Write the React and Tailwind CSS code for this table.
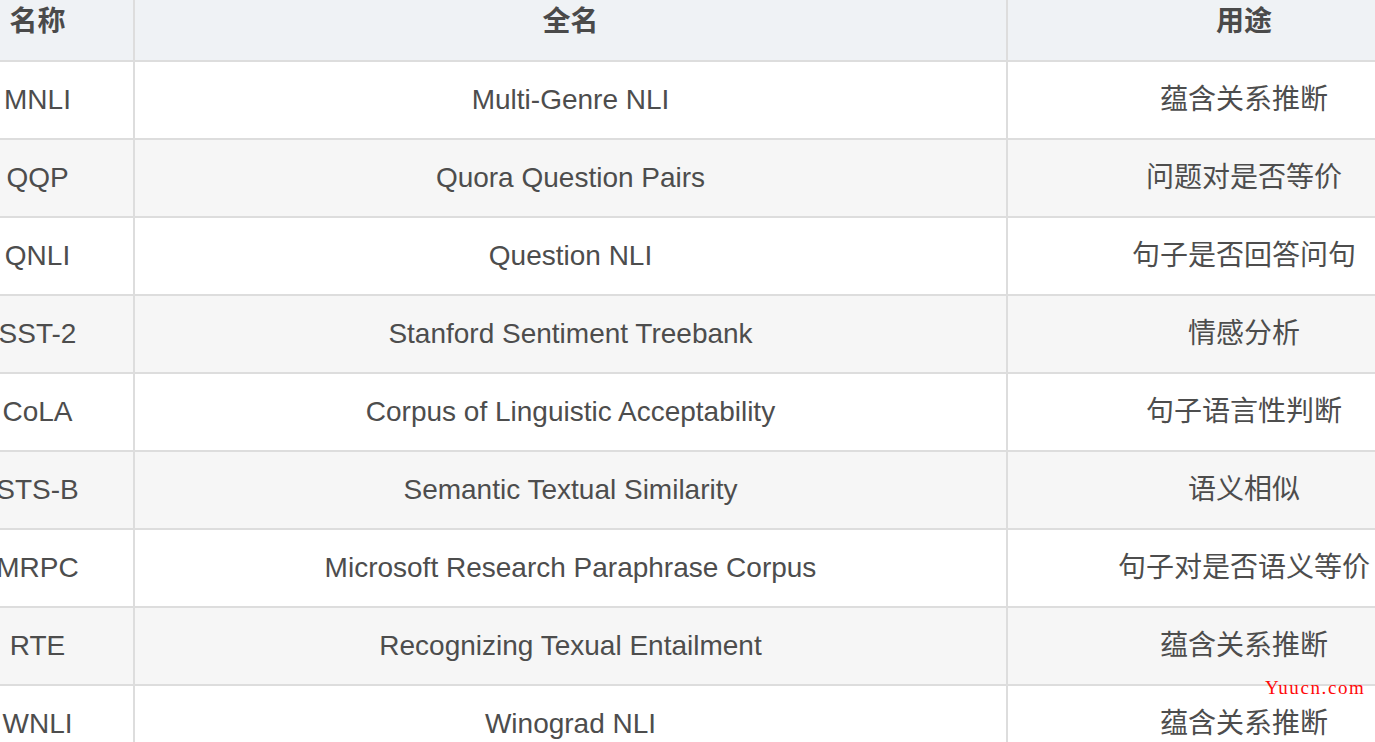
import React from "react";

const rows = [
  ["MNLI", "Multi-Genre NLI", "蕴含关系推断"],
  ["QQP", "Quora Question Pairs", "问题对是否等价"],
  ["QNLI", "Question NLI", "句子是否回答问句"],
  ["SST-2", "Stanford Sentiment Treebank", "情感分析"],
  ["CoLA", "Corpus of Linguistic Acceptability", "句子语言性判断"],
  ["STS-B", "Semantic Textual Similarity", "语义相似"],
  ["MRPC", "Microsoft Research Paraphrase Corpus", "句子对是否语义等价"],
  ["RTE", "Recognizing Texual Entailment", "蕴含关系推断"],
  ["WNLI", "Winograd NLI", "蕴含关系推断"],
];

function Row({ cells, bg }) {
  return (
    <div className={`flex h-[78px] border-b-2 border-[#dddddd] ${bg}`}>
      <div className="w-[193px] shrink-0 border-r-2 border-[#dddddd] flex items-center justify-center whitespace-nowrap">
        {cells[0]}
      </div>
      <div className="w-[873px] shrink-0 border-r-2 border-[#dddddd] flex items-center justify-center whitespace-nowrap">
        {cells[1]}
      </div>
      <div className="w-[472px] shrink-0 flex items-center justify-center whitespace-nowrap">
        {cells[2]}
      </div>
    </div>
  );
}

export default function App() {
  return (
    <div
      className="relative w-[1375px] h-[742px] overflow-hidden bg-white text-[28px] text-[#4d4d4d] leading-none"
      style={{ fontFamily: '"Liberation Sans", Arial, "Noto Sans CJK SC", sans-serif' }}
    >
      <div className="-ml-[58px] -mt-[16px] w-[1540px]">
        <div className="font-bold text-[#4a4a4a]">
          <Row cells={["名称", "全名", "用途"]} bg="bg-[#eff2f5]" />
        </div>
        {rows.map((r, i) => (
          <Row key={r[0]} cells={r} bg={i % 2 === 1 ? "bg-[#f6f6f6]" : "bg-white"} />
        ))}
      </div>
      <div
        className="absolute left-[1265px] top-[678px] text-[19px] tracking-[1.6px] text-[#ff0a0a] leading-none"
        style={{ fontFamily: '"Liberation Serif", "Times New Roman", serif' }}
      >
        Yuucn.com
      </div>
    </div>
  );
}
